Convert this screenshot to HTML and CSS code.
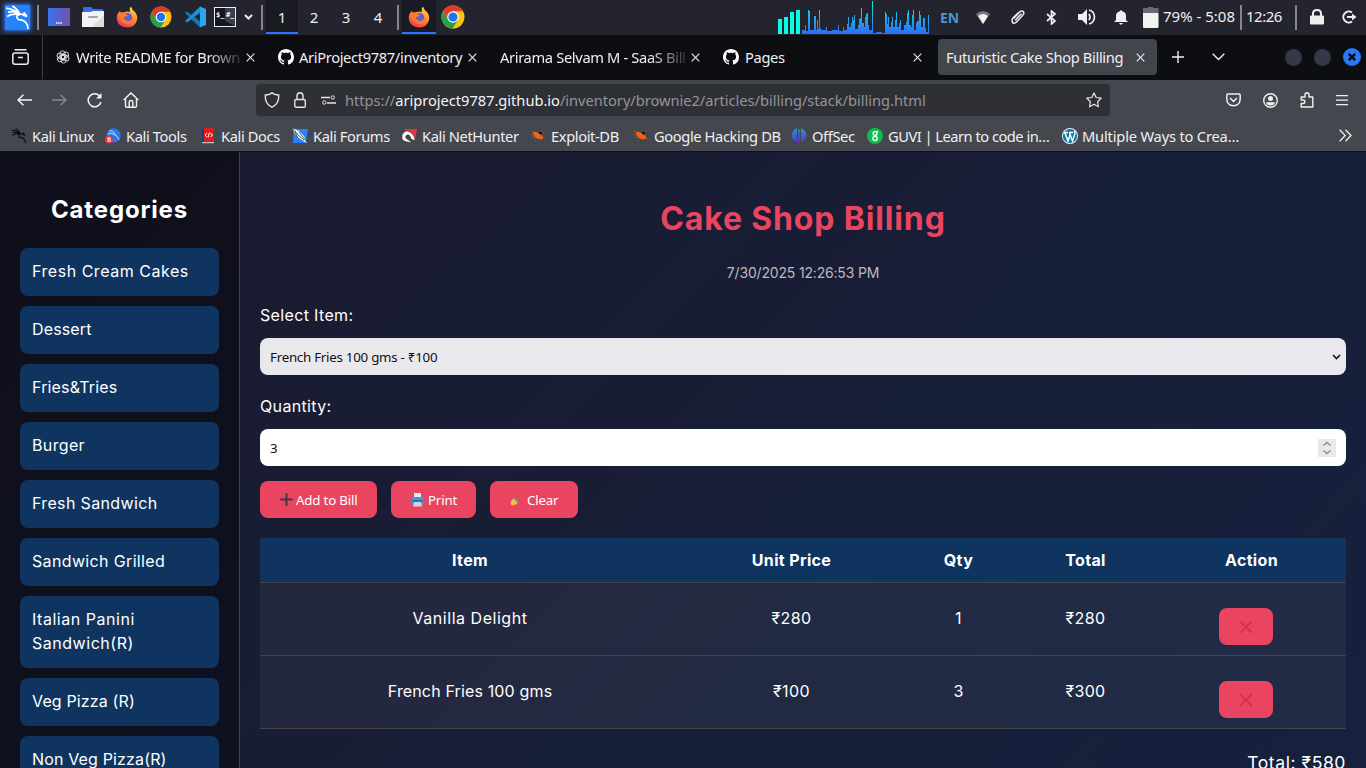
FILE: index.html
```html
<!DOCTYPE html>
<html lang="en">
<head>
<meta charset="utf-8">
<title>Futuristic Cake Shop Billing</title>
<link rel="stylesheet" href="styles.css">
</head>
<body>
<svg class="defs" width="0" height="0">
<defs>
<linearGradient id="ffx" x1="0.8" y1="0" x2="0.3" y2="1"><stop offset="0" stop-color="#ffe04a"/><stop offset=".5" stop-color="#ff8a2a"/><stop offset="1" stop-color="#f0305a"/></linearGradient>
<linearGradient id="desk" x1="0" y1="0" x2="1" y2="0"><stop offset="0" stop-color="#3b74ee"/><stop offset="1" stop-color="#7451a8"/></linearGradient>
<linearGradient id="aud" gradientUnits="userSpaceOnUse" x1="0" y1="0" x2="0" y2="34"><stop offset="0" stop-color="#0ff5e0"/><stop offset="1" stop-color="#2c6cf6"/></linearGradient>
<linearGradient id="off" x1="0" y1="0" x2="0" y2="1"><stop offset="0" stop-color="#15a0bd"/><stop offset="1" stop-color="#7020d8"/></linearGradient>
<symbol id="firefox" viewBox="0 0 22 22"><path d="M4 5L5 7.500Q7 6 9 6Q11 5 14 6Q13 2 15 .5Q16 4 19 6Q22 10 21 14Q19 21.500 11 21.500Q2 21 .8 13Q.5 8 3 6Z" fill="url(#ffx)"/><circle cx="11.500" cy="11.500" r="4.600" fill="#5660d8"/><path d="M3 7Q7 5 9 8L12 9Q11 11 8 11Q8 15 13 15Q17 14 16 10Q20 16 13 18Q5 18 4 12Z" fill="#ff7a2a"/></symbol>
<symbol id="chrome" viewBox="0 0 24 24"><circle cx="12" cy="12" r="11.500" fill="#fbc116"/><path d="M2 6.300A11.500 11.500 0 0 1 22 6.300H12L7 15Z" fill="#df3b2d"/><path d="M2 6.300A11.500 11.500 0 0 0 11.500 23.500L17 15L12 17L7 15Z" fill="#279f4c"/><circle cx="12" cy="12" r="5.800" fill="#fff"/><circle cx="12" cy="12" r="4.600" fill="#2175e8"/></symbol>
<symbol id="github" viewBox="0 0 16 16"><path fill="#fbfbfe" d="M8 0C3.580 0 0 3.580 0 8c0 3.540 2.290 6.530 5.470 7.590.4.070.55-.17.55-.38 0-.19-.01-.82-.01-1.490-2.010.37-2.530-.49-2.690-.94-.09-.23-.48-.94-.82-1.130-.28-.15-.68-.52-.01-.53.63-.01 1.080.58 1.230.82.72 1.210 1.870.87 2.330.66.07-.52.28-.87.51-1.070-1.780-.2-3.640-.89-3.640-3.950 0-.87.31-1.590.82-2.150-.08-.2-.36-1.020.08-2.120 0 0 .67-.21 2.200.82.64-.18 1.320-.27 2-.27s1.360.09 2 .27c1.530-1.040 2.200-.82 2.200-.82.44 1.100.16 1.920.08 2.120.51.56.82 1.270.82 2.150 0 3.070-1.870 3.750-3.650 3.950.29.25.54.73.54 1.480 0 1.070-.01 1.930-.01 2.200 0 .21.15.46.55.38A8 8 0 0 0 16 8c0-4.420-3.580-8-8-8z"/></symbol>
<symbol id="x" viewBox="0 0 9 9"><path d="M.7.7L8.300 8.300M8.300.7L.7 8.300" stroke="#e6e6ea" stroke-width="1.200" fill="none"/></symbol>
<symbol id="dragon" viewBox="0 0 24 24"><path d="M1 3Q9 4 14 9Q9 11 13 14Q18 14 20 17Q22 19 22 23M14 9Q18 8 21 11L17 9.500M3 7Q9 5 14 9M2 11Q7 8 12 9M7 1Q11 3 14 8M21 11L18 7" fill="none" stroke="currentColor" stroke-width="1.700"/></symbol>
<symbol id="bug" viewBox="0 0 16 14"><path d="M3 3Q7 2 10 5.500Q14 7 13 9.500Q11 11 7 9.500Q3 8 3 3Z" fill="#f26318"/><path d="M0 5L5 6M1 9L6 8M8 2L13 3L11 6M6 10L5 12M12 9L15 10M3 3L1 1" stroke="#a9552a" stroke-width=".7"/></symbol>
</defs>
</svg>

<header class="panel">
  <div class="cell"><svg class="kali" width="25" height="25" viewBox="0 0 24 24"><rect width="24" height="24" fill="#2583fc"/><g color="#fff"><use href="#dragon" width="24" height="24"/></g></svg></div>
  <div class="cell"><i class="sep"></i></div>
  <div class="cell"><svg width="22" height="18"><rect width="22" height="18" fill="url(#desk)"/><path d="M8 15H14" stroke="#fff" stroke-width="1.500" stroke-dasharray="1.500 .7"/></svg></div>
  <div class="cell"><svg width="22" height="20"><path d="M1 7V1Q1 0 2 0H9L11 2H20Q21 2 21 3V8H1Z" fill="#2f72e8"/><path d="M0 5H9L11 4H22V20H0Z" fill="#f2f2f4"/><path d="M22 8V20H10Z" fill="#dddde0"/><path d="M7 10H15" stroke="#a5a5aa" stroke-width="2" stroke-linecap="round"/></svg></div>
  <div class="cell"><svg width="22" height="22"><use href="#firefox"/></svg></div>
  <div class="cell"><svg width="22" height="22"><use href="#chrome"/></svg></div>
  <div class="cell"><svg width="22" height="22" viewBox="0 0 22 22"><path d="M1 7L3 5.500L17 16V21L16 21.500Z" fill="#1277bb"/><path d="M1 15L3 16.500L17 6V1L16 .5Z" fill="#188fd8"/><path d="M16 .5L22 3V19L16 21.500Z" fill="#2ba4ee"/></svg></div>
  <div class="cell"><svg width="22" height="20"><rect x=".5" y=".5" width="21" height="19" fill="#16161a" stroke="#eee"/><path d="M11 1H21V19L11 14Z" fill="#3a3d4c"/><text class="term" x="2" y="10">$_</text><text class="term" x="12" y="10">#_</text></svg></div>
  <div class="cell"><svg width="9" height="6"><path d="M1 1L4.500 4.500L8 1" stroke="#eee" stroke-width="2" fill="none"/></svg></div>
  <div class="cell"><i class="sep"></i></div>
  <div class="cell ws on">1</div><div class="cell ws">2</div><div class="cell ws">3</div><div class="cell ws">4</div>
  <div class="cell"><i class="sep"></i></div>
  <div class="cell on"><svg width="22" height="22"><use href="#firefox"/></svg></div>
  <div class="cell"><svg width="24" height="24"><use href="#chrome"/></svg></div>
  <div class="space"></div>
  <div class="audio"><svg width="153" height="35" shape-rendering="crispEdges"><path d="M0 34V19H4V34ZM6 34V17H10V34ZM12 34V12H16V34ZM18 34V10H22V34Z" fill="#08fbe3"/><path fill="url(#aud)" d="M24 34V30H27V25H28V31H30V10H31V11H32V30H36V16H38V30H39V20H40V29H41V10H42V28H43V30H48V27H49V31H54V30H60V25H61V31H65V27H66V30H69V24H70V17H71V27H73V23H74V17H75V20H76V15H77V29H80V25H81V19H82V18H83V8H84V23H86V27H87V17H88V14H89V13H90V25H91V30H94V1H95V33H98V32H104V33H107V12H108V14H109V24H110V17H111V27H113V22H114V17H115V27H117V20H118V12H119V27H121V23H122V20H123V30H126V25H128V22H129V13H130V10H131V25H133V27H134V15H135V10H136V30H138V23H139V21H141V11H142V15H143V27H145V18H147V28H148V32H150V15H151V34Z"/></svg></div>
  <div class="cell en">EN</div>
  <div class="cell"><svg width="14" height="13"><path d="M0 3Q7-3 14 3L7 13Z" fill="#77777b"/><path d="M2 5Q7 1 12 5L7 13Z" fill="#f2f2ee"/></svg></div>
  <div class="cell"><svg width="16" height="16" viewBox="0 0 16 16"><path d="M4 9L9.500 3Q12 .8 13.500 3Q14.500 4.500 12.500 6.500L6.500 13Q3.800 15.500 2.300 13Q1.500 11 3 9L8 4M5.500 11L11 5" fill="none" stroke="#eee" stroke-width="1.500" stroke-linecap="round"/></svg></div>
  <div class="cell"><svg width="11" height="15"><path d="M1 4L9 11L5.500 14V1L9 4L1 11" fill="none" stroke="#eee" stroke-width="1.700"/></svg></div>
  <div class="cell"><svg width="18" height="16"><path d="M0 5H4L9 0V16L4 11H0Z" fill="#eee"/><path d="M11 5Q13 8 11 11M11 1Q16 2 16.500 8Q16 14 11 15" fill="none" stroke="#eee" stroke-width="1.700"/></svg></div>
  <div class="cell"><svg width="14" height="15"><path d="M0 12L2 10V6Q2 2 5.500 1.500Q7-1 8.500 1.500Q12 2 12 6V10L14 12ZM5 13H9Q7 16.500 5 13Z" fill="#eee"/></svg></div>
  <div class="cell bat"><svg width="16" height="21"><path d="M0 1H5V0H10V1H15.500V6H0Z" fill="#6c6c6e"/><path d="M0 6H15.500V20Q15.500 21 14 21H1Q0 21 0 20Z" fill="#f2f2ee"/></svg></div>
  <div class="ptext">79% - 5:08</div>
  <div class="cell"><i class="sep"></i></div>
  <div class="ptext clock">12:26</div>
  <div class="cell"><i class="sep"></i></div>
  <div class="cell"><svg width="14" height="16"><path d="M3 8V4.500Q3 1 7 1T11 4.500V8" fill="none" stroke="#eee" stroke-width="2"/><rect y="6.500" width="14" height="9" rx="1" fill="#eee"/></svg></div>
  <div class="cell logout"><svg width="15" height="14"><path d="M10 2.500A5.500 5.500 0 1 0 10 11.500" fill="none" stroke="#eee" stroke-width="2"/><path d="M5 6H10V3.500L14.500 7L10 10.500V8H5Z" fill="#eee"/></svg></div>
</header>

<nav class="tabs">
  <div class="view"><svg width="17" height="16"><path d="M2.500.8H14.500M.8 6Q.8 4 3 4H14Q16.200 4 16.200 6V13Q16.200 15.200 14 15.200H3Q.8 15.200.8 13ZM6 8.500H11" fill="none" stroke="#eee" stroke-width="1.500"/></svg></div>
  <div class="tab tab1"><svg width="14" height="14" viewBox="0 0 14 14"><g fill="none" stroke="#ddd" stroke-width=".9"><rect x="4" y=".8" width="5" height="8" rx="2.500"/><rect x="4" y=".8" width="5" height="8" rx="2.500" transform="rotate(60 7 7)"/><rect x="4" y=".8" width="5" height="8" rx="2.500" transform="rotate(120 7 7)"/><rect x="4" y=".8" width="5" height="8" rx="2.500" transform="rotate(180 7 7)"/><rect x="4" y=".8" width="5" height="8" rx="2.500" transform="rotate(240 7 7)"/><rect x="4" y=".8" width="5" height="8" rx="2.500" transform="rotate(300 7 7)"/></g></svg><span class="label fade">Write README for Brown</span><svg class="close" width="9" height="9"><use href="#x"/></svg></div>
  <div class="tab tab2"><svg width="16" height="16"><use href="#github"/></svg><span class="label">AriProject9787/inventory</span><svg class="close" width="9" height="9"><use href="#x"/></svg></div>
  <div class="tab tab3"><span class="label fade">Arirama Selvam M - SaaS Bill</span><svg class="close" width="9" height="9"><use href="#x"/></svg></div>
  <div class="tab tab4"><svg width="16" height="16"><use href="#github"/></svg><span class="label">Pages</span><svg class="close" width="9" height="9"><use href="#x"/></svg></div>
  <div class="tab tab5"><span class="label">Futuristic Cake Shop Billing</span><svg class="close" width="9" height="9"><use href="#x"/></svg></div>
  <div class="tabtools"><svg width="12" height="12"><path d="M6 0V12M0 6H12" stroke="#eee" stroke-width="1.400"/></svg><svg width="13" height="8"><path d="M.7.7L6.500 6.500L12.300.7" fill="none" stroke="#eee" stroke-width="1.400"/></svg></div>
  <div class="winbtns"><i></i><i></i><svg width="18" height="18"><circle cx="9" cy="9" r="9" fill="#2777f7"/><path d="M5.800 5.800L12.200 12.200M12.200 5.800L5.800 12.200" stroke="#0b0c10" stroke-width="2.400"/></svg></div>
</nav>

<section class="toolbar">
  <div class="nav">
    <svg width="15" height="12"><path d="M15 6H1M6.500.7L1 6L6.500 11.300" fill="none" stroke="#f4f4f6" stroke-width="1.500"/></svg>
    <svg width="15" height="12"><path d="M0 6H14M8.500.7L14 6L8.500 11.300" fill="none" stroke="#85868c" stroke-width="1.500"/></svg>
    <svg width="16" height="15"><path d="M13 3.500A6.500 6.500 0 1 0 14 9" fill="none" stroke="#f4f4f6" stroke-width="1.500"/><path d="M14.500 0V5.500H9Z" fill="#f4f4f6"/></svg>
    <svg width="16" height="16"><path d="M.7 8L8 .9L15.300 8M2.500 7V14Q2.500 15.200 4 15.200H12Q13.500 15.200 13.500 14V7M6.200 15V10Q6.200 8.500 8 8.500T9.800 10V15" fill="none" stroke="#f4f4f6" stroke-width="1.400"/></svg>
  </div>
  <div class="url">
    <svg width="16" height="16"><path d="M8 .8Q10 3 14.700 3Q15.300 12 8 15.200Q.7 12 1.300 3Q6 3 8 .8Z" fill="none" stroke="#e4e4e8" stroke-width="1.400"/></svg>
    <svg width="12" height="16"><path d="M3 8V4Q3 .8 6 .8T9 4V8" fill="none" stroke="#e4e4e8" stroke-width="1.400"/><rect x=".8" y="7.500" width="10.500" height="7.700" rx="1.200" fill="none" stroke="#e4e4e8" stroke-width="1.400"/></svg>
    <svg width="15" height="10"><path d="M0 2.500H9M6 8H15" stroke="#e4e4e8" stroke-width="1.300"/><circle cx="11.800" cy="2.500" r="1.700" fill="none" stroke="#e4e4e8"/><circle cx="3.300" cy="7.500" r="1.700" fill="none" stroke="#e4e4e8"/></svg>
    <span class="address">https://<b>ariproject9787.github.io</b>/inventory/brownie2/articles/billing/stack/billing.html</span>
    <svg class="star" width="16" height="16"><path d="M8 1L10.200 5.500L15.200 6.200L11.600 9.700L12.400 14.700L8 12.300L3.600 14.700L4.400 9.700L.8 6.200L5.800 5.500Z" fill="none" stroke="#e4e4e8" stroke-width="1.200" stroke-linejoin="round"/></svg>
  </div>
  <div class="actions">
    <svg width="15" height="14"><path d="M2 1H13Q14.200 1 14.200 2.200V6Q14 12.500 7.500 12.700Q1 12.500.8 6V2.200Q.8 1 2 1ZM4 5L7.500 8.500L11 5" fill="none" stroke="#f0f0f2" stroke-width="1.500"/></svg>
    <svg width="15" height="15"><circle cx="7.500" cy="7.500" r="6.800" fill="none" stroke="#f0f0f2" stroke-width="1.400"/><circle cx="7.500" cy="5.500" r="2.500" fill="#f0f0f2"/><path d="M3 9.300H12Q11 12.500 7.500 12.500T3 9.300Z" fill="#f0f0f2"/></svg>
    <svg width="14" height="16"><path d="M1.200 5H5V3Q5 .8 7 .8T9 3V5H12.800V15H1.200V11.500H3Q4.800 11.500 4.800 9.700T3 8H1.200Z" fill="none" stroke="#f0f0f2" stroke-width="1.400" stroke-linejoin="round"/></svg>
    <svg width="12" height="11"><path d="M0 .7H12M0 5.200H12M0 9.700H12" stroke="#f0f0f2" stroke-width="1.300"/></svg>
  </div>
</section>

<section class="bookmarks">
  <a class="k1"><svg width="16" height="16" color="#0b0b0d"><use href="#dragon"/></svg>Kali Linux</a>
  <a class="k2"><svg width="16" height="16"><circle cx="8.500" cy="7.500" r="7.200" fill="#2777ed"/><path d="M4 3Q9 2 10 7Q13 8 14 12M3 6Q7 4 10 7" stroke="#c5ddff" fill="none"/><circle cx="4" cy="11.500" r="4" fill="#e53935"/><path d="M2.500 10H5.500M3.200 10V14M5 10V14" stroke="#fff"/></svg>Kali Tools</a>
  <a class="k3"><svg width="16" height="16"><rect x="2" width="12" height="14" fill="#dd1b1b"/><path d="M2 0H4V14H2Z" fill="#283a7a"/><path d="M2 14.700H14" stroke="#ddd"/><path d="M7 5L5 7L7 9M10.500 5L12.500 7L10.500 9M9.500 4.500L8 9.500" stroke="#fff" fill="none"/></svg>Kali Docs</a>
  <a class="k4"><svg width="16" height="16"><path d="M2 1H16L14 15H1Z" fill="#2783fc"/><path d="M0 0L7 3L12 8L15 15L8 11L3 6Z" fill="#f5f5f5"/><path d="M0 0L6 7L12 12M3 3L5 9M7 4L15 14" stroke="#333" fill="none" stroke-width=".8"/></svg>Kali Forums</a>
  <a class="k5"><svg width="16" height="16"><path d="M3 1H16L14 13Z" fill="#ee3037"/><path d="M1 7Q4 1 9 4Q14 7 14 13L10 11Q9 6 6 7Q3 9 6 11L11 14Q4 15 1 11Z" fill="#fff" stroke="#222" stroke-width=".6"/></svg>Kali NetHunter</a>
  <a class="k6"><svg width="16" height="14"><use href="#bug"/></svg>Exploit-DB</a>
  <a class="k7"><svg width="16" height="14"><use href="#bug"/></svg>Google Hacking DB</a>
  <a class="k8"><svg width="16" height="16"><path d="M6 0V14Q1 12 .5 7.500Q1 2 6 0ZM7.300 1H8.700V16H7.300ZM10 0Q15 2 15.500 7.500Q15 12 10 14Z" fill="url(#off)"/></svg>OffSec</a>
  <a class="k9"><svg width="16" height="16"><circle cx="8" cy="8" r="8" fill="#0ebd4e"/><circle cx="8" cy="5.500" r="1.900" fill="none" stroke="#fff" stroke-width="1.400"/><circle cx="8" cy="10.500" r="2.100" fill="none" stroke="#fff" stroke-width="1.400"/><path d="M9.500 4L11 3" stroke="#fff" stroke-width="1.300"/></svg>GUVI | Learn to code in…</a>
  <a class="k10"><svg width="16" height="16"><circle cx="8" cy="8" r="8" fill="#eee"/><circle cx="8" cy="8" r="7.100" fill="#0879aa"/><path d="M2 4.500H6M7 4.500H11M3 5L6 13L8 7M7.500 5L10.500 13L13 5.500Q13 4 12 3" fill="none" stroke="#fff" stroke-width="1.500"/></svg>Multiple Ways to Crea…</a>
  <svg class="more" width="13" height="13"><path d="M.7.7L6.200 6.500L.7 12.300M6.500.7L12 6.500L6.500 12.300" fill="none" stroke="#eee" stroke-width="1.300"/></svg>
</section>

<div class="app">
  <aside class="sidebar">
    <h2>Categories</h2>
    <div class="cat wide">Fresh Cream Cakes</div>
    <div class="cat tight">Dessert</div>
    <div class="cat tight">Fries&amp;Tries</div>
    <div class="cat">Burger</div>
    <div class="cat">Fresh Sandwich</div>
    <div class="cat">Sandwich Grilled</div>
    <div class="cat wide">Italian Panini<br>Sandwich(R)</div>
    <div class="cat tight">Veg Pizza (R)</div>
    <div class="cat tight">Non Veg Pizza(R)</div>
  </aside>
  <main class="main">
    <h1>Cake Shop Billing</h1>
    <p class="date">7/30/2025 12:26:53 PM</p>
    <div class="field-label">Select Item:</div>
    <div class="field select"><span>French Fries 100 gms - ₹100</span><svg width="9" height="6"><path d="M1 1L4.500 4.500L8 1" fill="none" stroke="#111" stroke-width="1.600"/></svg></div>
    <div class="field-label second">Quantity:</div>
    <div class="field number"><span>3</span><svg width="18" height="18"><rect width="18" height="18" fill="#e9e9ed"/><path d="M5.500 6.500L9 3.500L12.500 6.500M5.500 11.500L9 14.500L12.500 11.500" fill="none" stroke="#8f8f9d" stroke-width="1.600"/></svg></div>
    <div class="buttons">
      <div class="btn add"><svg width="13" height="13"><path d="M6.500 1V12M1 6.500H12" stroke="#40383d" stroke-width="2" stroke-linecap="round"/></svg>Add to Bill</div>
      <div class="btn print"><svg width="13" height="14"><rect x="3" width="7" height="5" fill="#e5e9ee"/><rect x=".5" y="4" width="12" height="7.500" rx="1.500" fill="#4195dc"/><path d="M1.500 8H11.500" stroke="#245078"/><path d="M3 9H10L11 13.500H2Z" fill="#cdd3da"/></svg>Print</div>
      <div class="btn clear"><svg width="13" height="13"><path d="M7 6L12.500.5" stroke="#b66b48" stroke-width="1.200"/><path d="M4 5L8 9Q6.500 12 2.500 12.500Q0 11.500.7 8.500Z" fill="#f9c23c"/><path d="M4.500 5.500L7.500 8.500" stroke="#3fa4c8" stroke-width="2"/></svg>Clear</div>
    </div>
    <div class="table">
      <div class="row head"><span>Item</span><span>Unit Price</span><span>Qty</span><span>Total</span><span>Action</span></div>
      <div class="row"><span class="wide">Vanilla Delight</span><span>₹280</span><span>1</span><span>₹280</span><span><i class="btn del"><svg width="14" height="14"><path d="M1.800 1.800L12.200 12.200M12.200 1.800L1.800 12.200" stroke="#dd2e44" stroke-width="1.800" stroke-linecap="round"/></svg></i></span></div>
      <div class="row"><span class="tight">French Fries 100 gms</span><span>₹100</span><span>3</span><span>₹300</span><span><i class="btn del"><svg width="14" height="14"><path d="M1.800 1.800L12.200 12.200M12.200 1.800L1.800 12.200" stroke="#dd2e44" stroke-width="1.800" stroke-linecap="round"/></svg></i></span></div>
    </div>
    <div class="total">Total: ₹580</div>
  </main>
</div>
</body>
</html>
```
FILE: styles.css
```css
* { box-sizing: border-box; }
html, body { height: 768px; margin: 0; overflow: hidden; }
body { font-family: "Noto Sans", sans-serif; font-size: 14px; color: #f0f0f2; background: #0d0e12; }
svg { display: block; flex: none; }
.defs { position: absolute; }

.panel {
  display: grid; height: 35px; align-items: stretch; background: #23242d;
  grid-template-columns: 34px 8px 34px 34px 34px 34px 33px 28px 18px 9px repeat(4, 32px) 8px 34px 34px 308px 154px 35px 31px 40px 26px 45px 24px 30px 74px 8px 44px 13px 29px 1fr;
}
.cell { display: flex; align-items: center; justify-content: center; height: 34px; }
.sep { width: 2px; height: 25px; background: #85868a; }
.on { background: #191a22; border-bottom: 2px solid #2777ff; border-top: 2px solid #191a22; }
.ws { font-size: 15px; }
.kali { box-shadow: 0 0 4px 1px #2777ff; }
.term { font: bold 7px "DejaVu Sans Mono", monospace; fill: #fff; }
.audio { height: 35px; }
.en { font: bold 14px "Noto Sans", sans-serif; color: #4a94d6; }
.bat { justify-content: flex-end; padding-right: 4px; }
.ptext { line-height: 33px; white-space: nowrap; font-size: 15px; }
.clock { letter-spacing: -.5px; padding-left: 1px; }
.logout { justify-content: flex-end; padding-right: 9px; }

.tabs { display: flex; height: 45px; padding-bottom: 1px; align-items: center; background: #0d0e12; }
.view { width: 43px; height: 44px; padding: 14px 0 0 12px; border-right: 1px solid #3c3d41; }
.tab { display: flex; align-items: center; height: 36px; white-space: nowrap; }
.label { margin-left: 6px; font-size: 14.670px; letter-spacing: -.34px; }
.close { margin-left: auto; }
.fade { -webkit-mask-image: linear-gradient(90deg, #000 80%, rgba(0, 0, 0, .15)); mask-image: linear-gradient(90deg, #000 80%, rgba(0, 0, 0, .15)); }
.tab1 { width: 199px; margin-left: 13px; }
.tab2 { width: 199px; margin-left: 23px; }
.tab2 .label { margin-left: 5px; }
.tab3 { width: 200px; margin-left: 23px; }
.tab3 .label { margin-left: 0; }
.tab4 { width: 199px; margin-left: 23px; }
.tab5 { width: 219px; margin-left: 16px; padding: 0 12px 0 8px; border-radius: 4px; background: #43454d; }
.tab5 .label { margin-left: 0; }
.tabtools { display: flex; align-items: center; gap: 28px; margin-left: 15px; }
.winbtns { display: flex; align-items: center; gap: 12px; margin-left: 60px; }
.winbtns i { width: 17px; height: 17px; border-radius: 50%; background: #343947; }

.toolbar { display: flex; height: 41px; background: #45474f; padding-top: 4px; }
.nav { display: flex; align-items: center; height: 32px; width: 256px; padding-left: 17px; gap: 20px; }
.url { display: flex; align-items: center; width: 854px; height: 32px; padding: 0 8px; border-radius: 4px; background: #2f3035; }
.url svg:nth-child(2) { margin-left: 14px; }
.url svg:nth-child(3) { margin-left: 15px; }
.address { margin-left: 9px; font-size: 14.670px; letter-spacing: -.03px; color: #93949a; white-space: nowrap; }
.address b { font-weight: 400; color: #f4f4f6; }
.url .star { margin-left: auto; }
.actions { display: flex; align-items: center; height: 32px; padding-left: 116px; gap: 22px; }
.bookmarks { display: flex; height: 31px; align-items: center; padding: 0 0 1px 11px; background: #45474f; border-bottom: 1px solid #101116; }
.bookmarks a { display: flex; align-items: center; gap: 5px; flex: none; white-space: nowrap; font-size: 14.670px; letter-spacing: -.38px; }
.k1 { width: 94px; } .k2 { width: 95px; } .k3 { width: 92px; } .k4 { width: 109px; }
.k5 { width: 129px; } .k6 { width: 103px; } .k7 { width: 158px; } .k8 { width: 76px; }
.k9 { width: 195px; }
.bookmarks .k9 { letter-spacing: -.5px; }
.bookmarks .k10 { width: 277px; letter-spacing: -.18px; gap: 4px; }

.app { display: flex; height: 616px; overflow: hidden; font-family: Inter, "Noto Sans", sans-serif; font-size: 16px; letter-spacing: .35px; color: #fff; background: linear-gradient(135deg, #1a1a2e, #16213e); }
.wide { letter-spacing: .53px; }
.tight { letter-spacing: .15px; }
.sidebar { width: 240px; flex: none; padding: 40px 20px 0; background: rgba(0, 0, 0, .4); border-right: 1px solid #444; }
.sidebar h2 { margin: 0 0 20px; font-size: 24px; line-height: 36px; text-align: center; letter-spacing: .85px; }
.cat { padding: 11px 12px 13px; margin-bottom: 10px; line-height: 24px; border-radius: 8px; background: #0f3460; }
.main { flex: 1; padding: 41px 20px 0; }
.main h1 { margin: 0; font-size: 32px; line-height: 52px; text-align: center; color: #e94560; letter-spacing: .85px; }
.date { margin: 17px 0 0; font-size: 14px; line-height: 21px; text-align: center; color: #bbb; letter-spacing: -.18px; }
.field-label { margin-top: 20px; line-height: 24px; height: 33px; }
.second { margin-top: 18px; height: 36px; line-height: 26px; }
.field { display: flex; align-items: center; justify-content: space-between; height: 37px; padding: 0 10px; border-radius: 8px; color: #111; font: 13.333px "Noto Sans", sans-serif; letter-spacing: -.26px; }
.select { background: #e9e9ed; padding-right: 5px; margin-top: 2px; }
.number { background: #fff; }
.buttons { display: flex; gap: 14px; margin: 15px 0 20px; }
.btn { display: flex; align-items: center; gap: 3px; height: 37px; padding-left: 20px; border-radius: 8px; background: #e94560; font: 13.333px "Noto Sans", sans-serif; letter-spacing: -.2px; white-space: nowrap; }
.add { width: 117px; } .print { width: 85px; } .clear { width: 88px; }
.print, .clear { gap: 4px; }
.row { display: grid; grid-template-columns: 420px 223px 111px 143px 189px; height: 73px; padding-bottom: 2px; align-items: center; text-align: center; background: rgba(255, 255, 255, .05); border-bottom: 1px solid #444; }
.head { height: 45px; padding-bottom: 1px; font-weight: 700; background: #0f3460; }
.del { width: 54px; margin: 17px 0 0 62px; }
.total { margin-top: 20px; font-size: 17.600px; line-height: 27px; text-align: right; letter-spacing: .55px; }
```
